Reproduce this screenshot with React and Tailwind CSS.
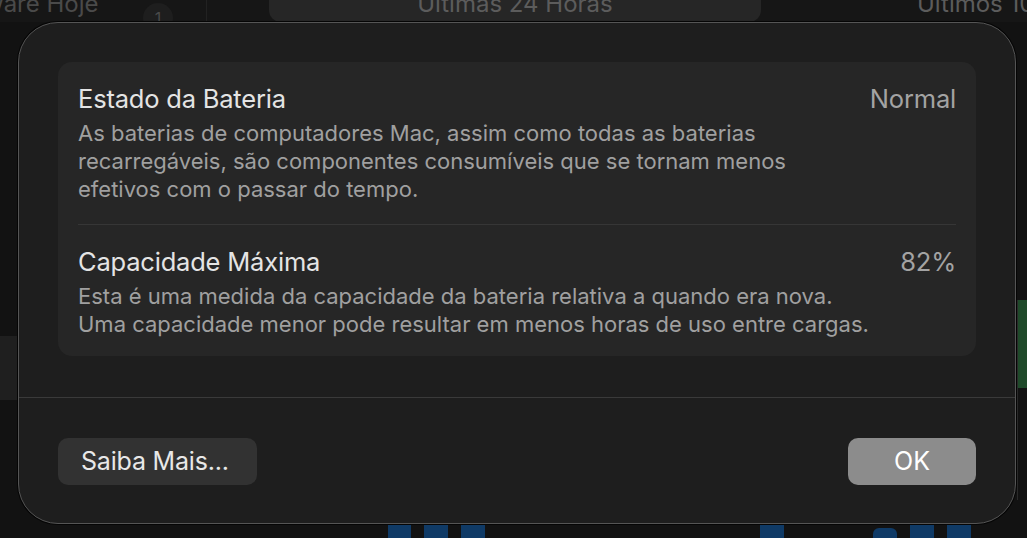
import React from 'react'

// macOS "Estado da Bateria" sheet over a dimmed Battery settings pane

const font = { fontFamily: 'Inter, "Noto Sans", "Liberation Sans", sans-serif' }

function InfoRow({ title, value, lines, className }) {
  return (
    <div className={className}>
      <div className="flex items-center justify-between h-[28px]">
        <span className="text-[25.5px] text-[#e4e4e4] tracking-[-0.2px]">{title}</span>
        <span className="text-[25.5px] text-[#a3a3a3] tracking-[-0.2px]">{value}</span>
      </div>
      <div className="mt-[6px] text-[22px] leading-[28px] text-[#a0a0a0] tracking-[0px]">
        {lines.map((l, i) => <div key={i} className="whitespace-nowrap">{l}</div>)}
      </div>
    </div>
  )
}

export default function App() {
  return (
    <div className="relative w-[1027px] h-[538px] overflow-hidden bg-[#121212]" style={font}>
      {/* dimmed app behind the sheet */}
      <div className="flex items-end h-[22px] bg-[#161616]">
        <div className="relative w-[207px] h-full border-r border-[#222]">
          <span className="absolute -top-[14px] -left-[16px] text-[24px] text-[#4a4a4a]">ware Hoje</span>
          <span className="absolute top-[3px] left-[143px] w-[30px] h-[30px] rounded-full bg-[#1e1e1e] text-[16px] text-[#4a4a4a] text-center leading-[30px]">1</span>
        </div>
        <div className="flex-1 flex justify-center h-full">
          <div className="relative w-[492px] h-full ml-[-94px] rounded-b-[12px] bg-[#262626] text-center">
            <span className="absolute -top-[14px] left-0 right-0 text-[24px] text-[#5c5c5c]">Últimas 24 Horas</span>
          </div>
        </div>
        <div className="relative w-[110px] h-full">
          <span className="absolute -top-[14px] left-[0px] text-[24px] text-[#5c5c5c] whitespace-nowrap">Últimos 10 Dias</span>
        </div>
      </div>
      <div className="absolute left-0 top-[336px] w-[18px] h-[64px] bg-[#1f1f1f]" />
      <div className="absolute right-0 top-[300px] w-[9px] h-[88px] bg-[#1f4a2a]" />
      <div className="absolute right-[9px] top-[300px] w-[1px] h-[200px] bg-[#2a2a2a]" />
      <div className="absolute bottom-0 left-[388px] flex items-end gap-[13px]">
        <div className="w-[23px] h-[14px] bg-[#0f3a66]" />
        <div className="w-[24px] h-[14px] bg-[#0f3a66]" />
        <div className="w-[24px] h-[14px] bg-[#0f3a66]" />
      </div>
      <div className="absolute bottom-0 left-[760px] w-[24px] h-[14px] bg-[#0f3a66]" />
      <div className="absolute bottom-0 left-[873px] flex items-end gap-[13px]">
        <div className="w-[24px] h-[10px] bg-[#0f3a66] rounded-t-[6px]" />
        <div className="w-[24px] h-[14px] bg-[#0f3a66]" />
        <div className="w-[24px] h-[14px] bg-[#0f3a66]" />
      </div>

      {/* sheet */}
      <div className="absolute left-[18px] top-[22px] w-[998px] h-[502px] rounded-[40px] border border-[#555] bg-[#1e1e1e] shadow-[0_0_0_1px_#050505] flex flex-col">
        <div className="px-[39px] pt-[39px]">
          <div className="rounded-[14px] bg-[#262626]">
            <InfoRow
              className="px-5 pt-[23px] pb-[21px]"
              title="Estado da Bateria"
              value="Normal"
              lines={[
                'As baterias de computadores Mac, assim como todas as baterias',
                'recarregáveis, são componentes consumíveis que se tornam menos',
                'efetivos com o passar do tempo.',
              ]}
            />
            <div className="mx-5 h-px bg-[#363636]" />
            <InfoRow
              className="px-5 pt-[23px] pb-[18px]"
              title="Capacidade Máxima"
              value="82%"
              lines={[
                'Esta é uma medida da capacidade da bateria relativa a quando era nova.',
                'Uma capacidade menor pode resultar em menos horas de uso entre cargas.',
              ]}
            />
          </div>
        </div>
        <div className="mt-[41px] h-px bg-[#3a3a3a]" />
        <div className="flex justify-between px-[39px] pt-[40px]">
          <button className="w-[199px] h-[47px] rounded-[10px] bg-[#323232] text-[25px] text-[#e8e8e8] text-left pl-[23px] tracking-[-0.2px]">Saiba Mais...</button>
          <button className="w-[128px] h-[47px] rounded-[10px] bg-[#8c8c8c] text-[25px] text-white">OK</button>
        </div>
      </div>
    </div>
  )
}
